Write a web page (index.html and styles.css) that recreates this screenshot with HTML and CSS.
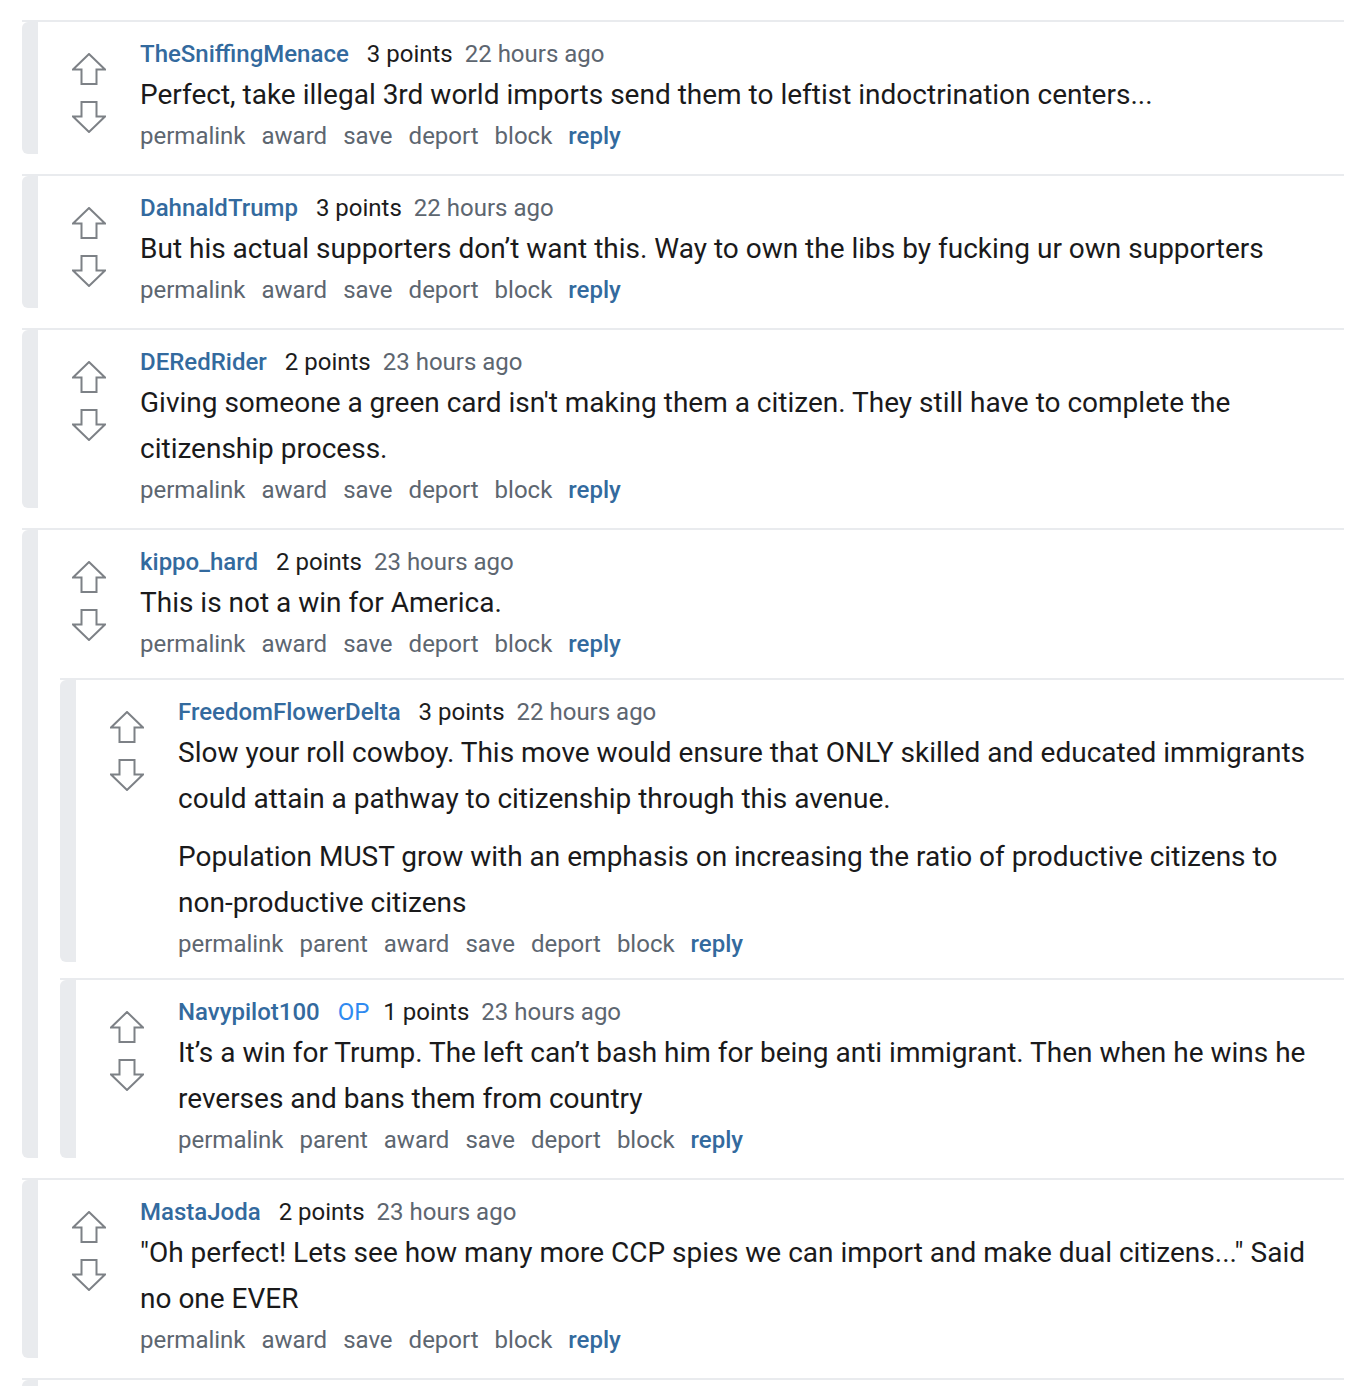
FILE: index.html
```html
<!DOCTYPE html>
<html lang="en">
<head>
<meta charset="utf-8">
<title>Comments</title>
<link rel="stylesheet" href="styles.css">
</head>
<body>
<div class="thread">

  <div class="comment">
    <div class="inner">
      <div class="row">
        <div class="votes">
          <svg class="arrow" viewBox="0 0 34 32"><path d="M17 1 L33 16.5 H24.5 V31 H9.5 V16.5 H1 Z"/></svg>
          <svg class="arrow" viewBox="0 0 34 32"><path d="M9.5 1 H24.5 V15.5 H33 L17 31 L1 15.5 H9.5 Z"/></svg>
        </div>
        <div class="content">
          <div class="meta"><span class="user">TheSniffingMenace</span><span class="score">3 points</span><span class="time">22 hours ago</span></div>
          <div class="body"><p>Perfect, take illegal 3rd world imports send them to leftist indoctrination centers...</p></div>
          <div class="actions"><span>permalink</span><span>award</span><span>save</span><span>deport</span><span>block</span><span class="reply">reply</span></div>
        </div>
      </div>
    </div>
  </div>

  <div class="comment">
    <div class="inner">
      <div class="row">
        <div class="votes">
          <svg class="arrow" viewBox="0 0 34 32"><path d="M17 1 L33 16.5 H24.5 V31 H9.5 V16.5 H1 Z"/></svg>
          <svg class="arrow" viewBox="0 0 34 32"><path d="M9.5 1 H24.5 V15.5 H33 L17 31 L1 15.5 H9.5 Z"/></svg>
        </div>
        <div class="content">
          <div class="meta"><span class="user">DahnaldTrump</span><span class="score">3 points</span><span class="time">22 hours ago</span></div>
          <div class="body"><p>But his actual supporters don’t want this. Way to own the libs by fucking ur own supporters</p></div>
          <div class="actions"><span>permalink</span><span>award</span><span>save</span><span>deport</span><span>block</span><span class="reply">reply</span></div>
        </div>
      </div>
    </div>
  </div>

  <div class="comment">
    <div class="inner">
      <div class="row">
        <div class="votes">
          <svg class="arrow" viewBox="0 0 34 32"><path d="M17 1 L33 16.5 H24.5 V31 H9.5 V16.5 H1 Z"/></svg>
          <svg class="arrow" viewBox="0 0 34 32"><path d="M9.5 1 H24.5 V15.5 H33 L17 31 L1 15.5 H9.5 Z"/></svg>
        </div>
        <div class="content">
          <div class="meta"><span class="user">DERedRider</span><span class="score">2 points</span><span class="time">23 hours ago</span></div>
          <div class="body"><p>Giving someone a green card isn't making them a citizen. They still have to complete the citizenship process.</p></div>
          <div class="actions"><span>permalink</span><span>award</span><span>save</span><span>deport</span><span>block</span><span class="reply">reply</span></div>
        </div>
      </div>
    </div>
  </div>

  <div class="comment">
    <div class="inner">
      <div class="row">
        <div class="votes">
          <svg class="arrow" viewBox="0 0 34 32"><path d="M17 1 L33 16.5 H24.5 V31 H9.5 V16.5 H1 Z"/></svg>
          <svg class="arrow" viewBox="0 0 34 32"><path d="M9.5 1 H24.5 V15.5 H33 L17 31 L1 15.5 H9.5 Z"/></svg>
        </div>
        <div class="content">
          <div class="meta"><span class="user">kippo_hard</span><span class="score">2 points</span><span class="time">23 hours ago</span></div>
          <div class="body"><p>This is not a win for America.</p></div>
          <div class="actions"><span>permalink</span><span>award</span><span>save</span><span>deport</span><span>block</span><span class="reply">reply</span></div>
        </div>
      </div>

      <div class="children">
        <div class="comment child">
          <div class="inner">
            <div class="row">
              <div class="votes">
                <svg class="arrow" viewBox="0 0 34 32"><path d="M17 1 L33 16.5 H24.5 V31 H9.5 V16.5 H1 Z"/></svg>
                <svg class="arrow" viewBox="0 0 34 32"><path d="M9.5 1 H24.5 V15.5 H33 L17 31 L1 15.5 H9.5 Z"/></svg>
              </div>
              <div class="content">
                <div class="meta"><span class="user">FreedomFlowerDelta</span><span class="score">3 points</span><span class="time">22 hours ago</span></div>
                <div class="body">
                  <p>Slow your roll cowboy. This move would ensure that ONLY skilled and educated immigrants could attain a pathway to citizenship through this avenue.</p>
                  <p>Population MUST grow with an emphasis on increasing the ratio of productive citizens to non-productive citizens</p>
                </div>
                <div class="actions"><span>permalink</span><span>parent</span><span>award</span><span>save</span><span>deport</span><span>block</span><span class="reply">reply</span></div>
              </div>
            </div>
          </div>
        </div>

        <div class="comment child">
          <div class="inner">
            <div class="row">
              <div class="votes">
                <svg class="arrow" viewBox="0 0 34 32"><path d="M17 1 L33 16.5 H24.5 V31 H9.5 V16.5 H1 Z"/></svg>
                <svg class="arrow" viewBox="0 0 34 32"><path d="M9.5 1 H24.5 V15.5 H33 L17 31 L1 15.5 H9.5 Z"/></svg>
              </div>
              <div class="content">
                <div class="meta"><span class="user">Navypilot100</span><span class="op">OP</span><span class="score">1 points</span><span class="time">23 hours ago</span></div>
                <div class="body"><p>It’s a win for Trump. The left can’t bash him for being anti immigrant. Then when he wins he reverses and bans them from country</p></div>
                <div class="actions"><span>permalink</span><span>parent</span><span>award</span><span>save</span><span>deport</span><span>block</span><span class="reply">reply</span></div>
              </div>
            </div>
          </div>
        </div>
      </div>
    </div>
  </div>

  <div class="comment">
    <div class="inner">
      <div class="row">
        <div class="votes">
          <svg class="arrow" viewBox="0 0 34 32"><path d="M17 1 L33 16.5 H24.5 V31 H9.5 V16.5 H1 Z"/></svg>
          <svg class="arrow" viewBox="0 0 34 32"><path d="M9.5 1 H24.5 V15.5 H33 L17 31 L1 15.5 H9.5 Z"/></svg>
        </div>
        <div class="content">
          <div class="meta"><span class="user">MastaJoda</span><span class="score">2 points</span><span class="time">23 hours ago</span></div>
          <div class="body"><p>"Oh perfect! Lets see how many more CCP spies we can import and make dual citizens..." Said no one EVER</p></div>
          <div class="actions"><span>permalink</span><span>award</span><span>save</span><span>deport</span><span>block</span><span class="reply">reply</span></div>
        </div>
      </div>
    </div>
  </div>

  <div class="comment stub">
    <div class="inner"></div>
  </div>

</div>
</body>
</html>
```

FILE: styles.css
```css
html, body {
  margin: 0;
  padding: 0;
  background: #ffffff;
}

body {
  font-family: Roboto, "Liberation Sans", Arial, sans-serif;
  color: #1c1c1c;
  height: 1386px;
  overflow: hidden;
}

.thread {
  padding: 20px 10px 0 22px;
}

.comment {
  border-top: 2px solid #e9ebee;
  margin-bottom: 20px;
}

.children {
  margin-left: 22px;
}

.comment.child {
  margin-top: 16px;
  margin-bottom: 0;
}

.inner {
  border-left: 16px solid #e9ebee;
  border-radius: 6px 0 0 6px;
}

.row {
  display: flex;
  align-items: flex-start;
}

.votes {
  width: 102px;
  flex: 0 0 102px;
  display: flex;
  flex-direction: column;
  align-items: center;
  padding-top: 31px;
  gap: 16px;
}

.arrow {
  width: 34px;
  height: 32px;
  display: block;
}

.arrow path {
  fill: none;
  stroke: #7d8186;
  stroke-width: 2;
  stroke-linejoin: miter;
}

.content {
  flex: 1 1 auto;
  min-width: 0;
  padding: 15px 20px 0 0;
}

.meta {
  font-size: 24px;
  line-height: 35px;
  white-space: nowrap;
}

.user {
  color: #336a9e;
  font-weight: 500;
  margin-right: 13px;
}

.op {
  color: #2f8af0;
  margin-right: 9px;
}

.score {
  color: #1c1c1c;
  margin-right: 12px;
}

.user + .score,
.op + .score {
  margin-left: 5px;
}

.user + .op {
  margin-left: 5px;
}

.time {
  color: #5d6670;
}

.body {
  font-size: 28px;
  line-height: 46px;
  color: #1a1a1b;
}

.body p {
  margin: 0;
}

.body p + p {
  margin-top: 12px;
}

.actions {
  display: flex;
  gap: 16px;
  font-size: 24px;
  line-height: 36px;
  color: #5d6670;
}

.reply {
  color: #336a9e;
  font-weight: 500;
}

.stub .inner {
  height: 6px;
  border-radius: 6px 0 0 0;
}
```
